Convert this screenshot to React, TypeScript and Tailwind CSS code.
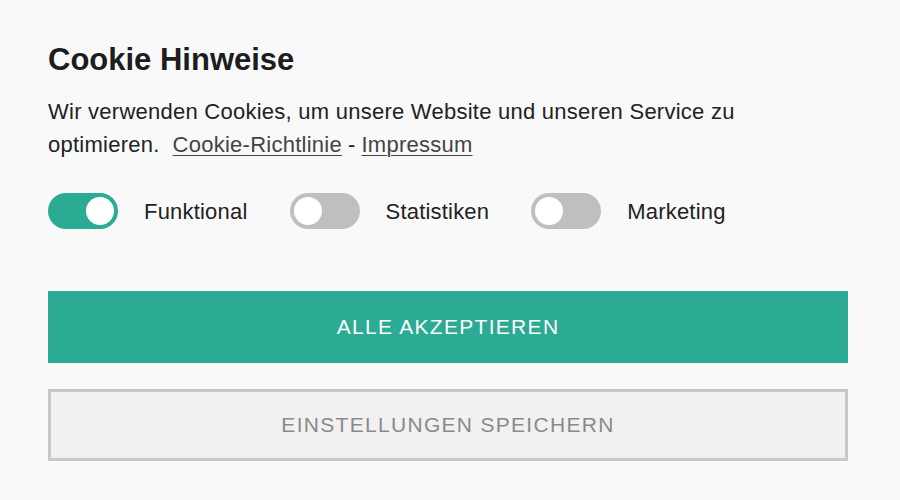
import React, { useState } from 'react';

const Toggle = ({ on, onClick }: { on: boolean; onClick: () => void }) => (
  <button
    onClick={onClick}
    className={`relative w-[70px] h-[36px] rounded-full flex items-center px-[4px] ${
      on ? 'bg-[#2baa94] justify-end' : 'bg-[#bfbfbf] justify-start'
    }`}
  >
    <span className="w-[28px] h-[28px] rounded-full bg-white block" />
  </button>
);

const App = () => {
  const [prefs, setPrefs] = useState({ Funktional: true, Statistiken: false, Marketing: false });

  return (
    <div className="w-[900px] h-[500px] bg-[#f9f9f9] font-['Liberation_Sans',Arial,sans-serif] text-[#1d1d1f] px-[48px] pt-[41px]">
      <h1 className="text-[31px] font-bold leading-[38px]">Cookie Hinweise</h1>

      <p className="mt-[16px] text-[22px] tracking-[0.25px] leading-[33px] text-[#222] w-[740px]">
        <span>Wir verwenden Cookies, um unsere Website und unseren Service zu </span>
        <span className="mr-[13px]">optimieren.</span>
        <a href="#" className="underline underline-offset-[3px] decoration-1 text-[#444]">Cookie-Richtlinie</a>
        <span className="mx-[6px]">-</span>
        <a href="#" className="underline underline-offset-[3px] decoration-1 text-[#444]">Impressum</a>
      </p>

      {/* Kategorien */}
      <div className="mt-[32px] flex items-center gap-[42px]">
        {(Object.keys(prefs) as (keyof typeof prefs)[]).map((k) => (
          <div key={k} className="flex items-center gap-[26px]">
            <Toggle on={prefs[k]} onClick={() => setPrefs({ ...prefs, [k]: !prefs[k] })} />
            <span className="text-[22px] tracking-[0.2px] text-[#222]">{k}</span>
          </div>
        ))}
      </div>

      <div className="mt-[62px] w-[800px] flex flex-col gap-[26px]">
        <button className="h-[72px] bg-[#2baa94] text-white text-[21px] tracking-[1.3px]">
          ALLE AKZEPTIEREN
        </button>
        <button className="h-[72px] bg-[#f1f1f1] border-[3px] border-[#c8c8c8] text-[#8a8a8a] text-[21px] tracking-[1.3px]">
          EINSTELLUNGEN SPEICHERN
        </button>
      </div>
    </div>
  );
};

export default App;
